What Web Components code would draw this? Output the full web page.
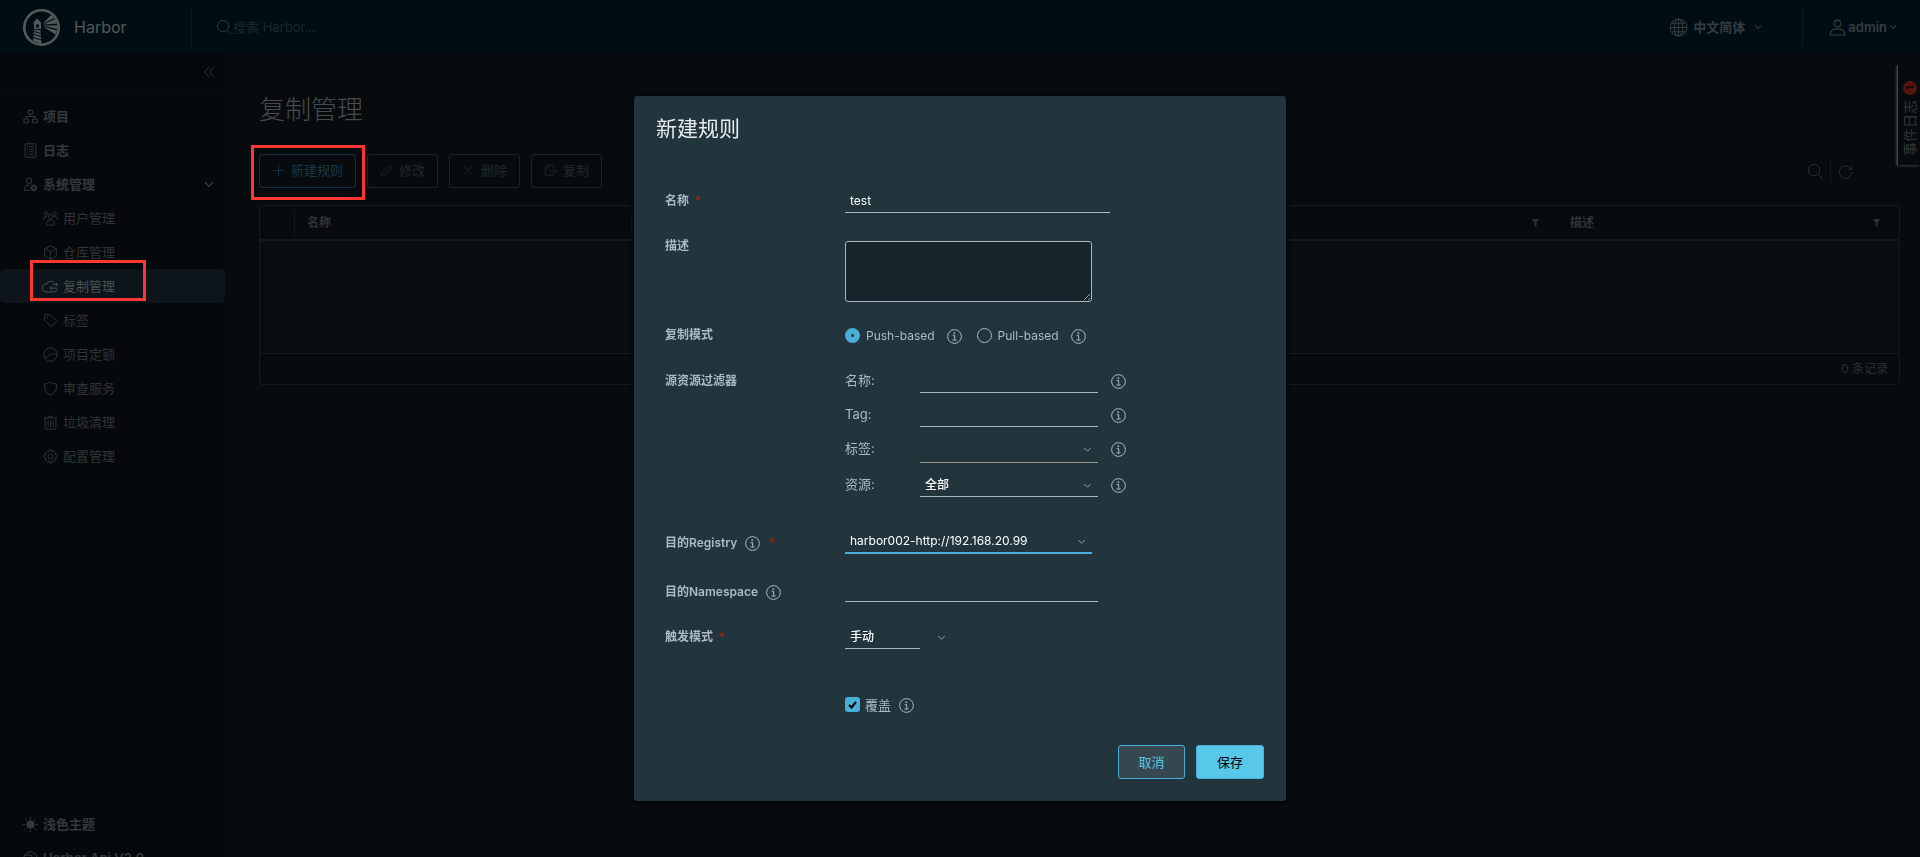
<!DOCTYPE html>
<html lang="zh-CN">
<head>
<meta charset="utf-8">
<title>Harbor</title>
<style>
  html, body { margin: 0; height: 100%; overflow: hidden; background: #070b0e; }
  body { font: 13px/24px Inter, "Noto Sans CJK SC", sans-serif; color: #2f3538; }
</style>
</head>
<body>
<hb-app></hb-app>
<script>
const ICONS = {
  info: '<circle cx="18" cy="18" r="16.500"/><circle cx="17.5" cy="10" r="1.8" fill="currentColor" stroke-width="1"/><path d="M13.500 16h5v10M13 26.500h10"/>',
  chevron: '<path d="M5 12l13 13 13-13"/>',
  collapse: '<path d="M17 5L5 18l12 13M31 5L19 18l12 13"/>',
  search: '<circle cx="15" cy="15" r="12"/><path d="M24 24l9 9"/>',
  globe: '<circle cx="18" cy="18" r="16"/><ellipse cx="18" cy="18" rx="8" ry="16"/><path d="M18 2v32M2 18h32M5 10h26M5 26h26"/>',
  user: '<circle cx="18" cy="9.500" r="7"/><path d="M3 34v-5q3-8 15-8t15 8v5z"/>',
  org: '<path d="M13 3h10v9H13zM2 24h11v9H2zM23 24h11v9H23zM18 12v6M7 24v-6h22v6"/>',
  list: '<rect x="5" y="2" width="26" height="32" rx="2"/><path d="M10 9h2M15 9h11M10 15h2M15 15h11M10 21h2M15 21h11M10 27h2M15 27h11"/>',
  admin: '<circle cx="15" cy="9" r="6.500"/><path d="M16 32H3v-6q3-7 13-7"/><circle cx="26" cy="26" r="5" stroke-width="4"/><path d="M26 17v4M26 31v4M17 26h4M31 26h4M20 20l2 2M30 30l2 2M32 20l-2 2M22 30l-2 2"/>',
  users: '<circle cx="18" cy="13" r="5"/><circle cx="8" cy="6" r="4"/><circle cx="28" cy="6" r="4"/><path d="M9 34v-8q2-5 9-5t9 5v8zM2 22v-6q2-4 8-3M34 22v-6q-2-4-8-3"/>',
  cube: '<path d="M18 2l14 7v18l-14 7-14-7V9zM4 9l14 7 14-7M18 16v18"/>',
  cloud: '<path d="M27 10a10 10 0 0 0-18 2A9 9 0 0 0 7 31h20q6 0 8-6M17 22h18M22 17l-5 5 5 5M24 13h11M31 9l4 4-4 4"/>',
  tag: '<path d="M4 4h13l16 16-13 13L4 17z"/><circle cx="10.500" cy="10.500" r="1.500"/>',
  quota: '<circle cx="18" cy="18" r="16"/><path d="M5 27l13-10h16"/>',
  shield: '<path d="M18 2q7 5 14 5v10q0 11-14 17Q4 28 4 17V7q7 0 14-5z"/>',
  trash: '<path d="M2 7h32M13 7V3h10v4M5 7v24q0 3 3 3h20q3 0 3-3V7M12 13v16M18 13v16M24 13v16"/>',
  gear: '<circle cx="18" cy="18" r="6"/><path d="M15 2h6l1 5 4-3 5 5-3 4 5 1v7l-5 1 3 4-5 5-4-3-1 5h-6l-1-5-4 3-5-5 3-4-5-1v-7l5-1-3-4 5-5 4 3z"/>',
  sun: '<circle cx="18" cy="18" r="9" fill="currentColor"/><path d="M18 0v5M18 31v5M0 18h5M31 18h5M5 5l4 4M27 27l4 4M31 5l-4 4M9 27l-4 4"/>',
  api: '<circle cx="18" cy="18" r="16"/><path d="M5 10h16v6h11M10 32v-8h16v-7"/>',
  plus: '<path d="M18 2v32M2 18h32"/>',
  pencil: '<path d="M3 33l3-10L26 3q3-1 5 2t1 5L12 30zM22 7l7 7"/>',
  cross: '<path d="M6 6l24 24M30 6L6 30"/>',
  copy: '<path d="M26 12V3H11l-7 7v21h22v-5M11 3v8H4M14 19h20M28 13l6 6-6 6"/>',
  refresh: '<path d="M31 12a15 15 0 1 0 2 8M33 3v10H23"/>',
  filter: '<path d="M2 4h32L22 18v16h-8V18z" fill="currentColor"/>'
};

/* Square line icon drawn on a 36-unit grid: <hb-icon name="..."> sized by --size */
customElements.define('hb-icon', class extends HTMLElement {
  connectedCallback() {
    if (this.shadowRoot) return;
    this.attachShadow({ mode: 'open' }).innerHTML = `
      <style>
        :host { display: inline-block; flex: none; width: var(--size, 15px); height: var(--size, 15px); }
        svg { display: block; width: 100%; height: 100%; fill: none; stroke: currentColor; stroke-width: var(--stroke, 2.4); overflow: visible; }
      </style>
      <svg viewBox="0 0 36 36" aria-hidden="true">${ICONS[this.getAttribute('name')]}</svg>`;
  }
});

customElements.define('hb-header', class extends HTMLElement {
  constructor() {
    super();
    this.attachShadow({ mode: 'open' }).innerHTML = `
      <style>
        :host { display: flex; align-items: center; height: 54px; background: #000e14; color: #343c40; box-sizing: border-box; }
        .brand { display: flex; align-items: center; gap: 14px; width: 191px; padding-left: 23px; box-sizing: border-box; color: #54585a; font-size: 16px; text-decoration: none; }
        .brand svg { width: 37px; height: 37px; }
        .rule { width: 1px; height: 38px; background: #0b1a20; }
        .search { display: flex; align-items: center; flex: 1; padding-left: 24px; --size: 17px; --stroke: 2; }
        input { flex: 1; min-width: 0; border: 0; padding: 0; background: none; font: inherit; color: inherit; outline: 0; }
        input::placeholder { color: #1c272c; opacity: 1; }
        button { display: flex; align-items: center; border: 0; background: none; padding: 0; font: inherit; font-weight: 600; color: inherit; }
        .lang { width: 133px; gap: 5px; --size: 19px; --stroke: 2; }
        .user { padding: 0 23px 0 26px; gap: 2px; --size: 17px; --stroke: 2.4; }
        .lang .chev { margin-left: 4px; }
        .chev { --size: 8px; --stroke: 5; }
      </style>
      <a class="brand" href="#">
        <svg viewBox="0 0 37 37" aria-hidden="true">
          <circle cx="18.500" cy="18.500" r="17.200" fill="none" stroke="#54585a" stroke-width="2.600"/>
          <path d="M20 14.500L28 6l3.500 3zM20 15.500L32.500 10l1.500 4.500zM20 16.500L34.500 16.500v3.500zM20 17.500L34 21.500l-1.500 4z" fill="#54585a"/>
          <path d="M10 14l4-4.500 4.500 4.500zM11 14h7v6h-7zM11 21h6.500l1 14-8.500-3z" fill="#54585a"/>
          <path d="M13 15.500h3v3h-3z" fill="#000e14"/>
          <path d="M11 22.500l7 2M10.500 25.500l8 2M10 28.500l9 2.500" fill="none" stroke="#000e14" stroke-width="1"/>
        </svg>
        <span>Harbor</span>
      </a>
      <div class="rule"></div>
      <label class="search"><hb-icon name="search"></hb-icon><input type="search" aria-label="搜索" placeholder="搜索 Harbor..."></label>
      <button class="lang"><hb-icon name="globe"></hb-icon>中文简体<hb-icon class="chev" name="chevron"></hb-icon></button>
      <div class="rule"></div>
      <button class="user"><hb-icon name="user"></hb-icon>admin<hb-icon class="chev" name="chevron"></hb-icon></button>`;
  }
});

/* One navigation link; level="2" indents it, "active" fills its row, "mark" frames it */
customElements.define('hb-nav-item', class extends HTMLElement {
  connectedCallback() {
    if (this.shadowRoot) return;
    this.attachShadow({ mode: 'open' }).innerHTML = `
      <style>
        :host { display: block; position: relative; }
        a { display: flex; align-items: center; gap: 5px; height: 34px; padding: 0 10px 0 23px; color: #34393c; font-weight: 600; text-decoration: none; }
        :host([level="2"]) a { padding-left: 43px; font-weight: 400; color: #2f3437; }
        :host([level="2"][active]) a { background: #0d151b; border-radius: 5px; color: #4a4f52; }
        span { flex: 1; }
        .chev { --size: 12px; --stroke: 4; }
        .mark { position: absolute; left: 30px; top: -9px; width: 116px; height: 41px; border: 3px solid #fb3735; box-sizing: border-box; }
      </style>
      <a href="#"><hb-icon name="${this.getAttribute('icon')}"></hb-icon><span><slot></slot></span>
        ${this.hasAttribute('expanded') ? '<hb-icon class="chev" name="chevron"></hb-icon>' : ''}</a>
      ${this.hasAttribute('mark') ? '<div class="mark"></div>' : ''}`;
  }
});

customElements.define('hb-sidenav', class extends HTMLElement {
  constructor() {
    super();
    this.attachShadow({ mode: 'open' }).innerHTML = `
      <style>
        :host { display: flex; flex-direction: column; width: 225px; flex: none; background: #05090c; }
        .collapse { display: flex; align-items: center; justify-content: flex-end; height: 36px; padding: 0 10px; border: 0; border-bottom: 1px solid #0a0e11; background: none; color: #34393c; box-sizing: border-box; --size: 12px; --stroke: 3; }
        nav { padding-top: 9px; flex: 1; }
        .bottom { flex: none; margin-bottom: -18px; }
      </style>
      <button class="collapse" aria-label="收起"><hb-icon name="collapse"></hb-icon></button>
      <nav>
        <hb-nav-item icon="org">项目</hb-nav-item>
        <hb-nav-item icon="list">日志</hb-nav-item>
        <hb-nav-item icon="admin" expanded>系统管理</hb-nav-item>
        <hb-nav-item level="2" icon="users">用户管理</hb-nav-item>
        <hb-nav-item level="2" icon="cube">仓库管理</hb-nav-item>
        <hb-nav-item level="2" icon="cloud" active mark>复制管理</hb-nav-item>
        <hb-nav-item level="2" icon="tag">标签</hb-nav-item>
        <hb-nav-item level="2" icon="quota">项目定额</hb-nav-item>
        <hb-nav-item level="2" icon="shield">审查服务</hb-nav-item>
        <hb-nav-item level="2" icon="trash">垃圾清理</hb-nav-item>
        <hb-nav-item level="2" icon="gear">配置管理</hb-nav-item>
      </nav>
      <div class="bottom">
        <hb-nav-item icon="sun">浅色主题</hb-nav-item>
        <hb-nav-item icon="api">Harbor Api V2.0</hb-nav-item>
      </div>`;
  }
});

customElements.define('hb-replication', class extends HTMLElement {
  constructor() {
    super();
    this.attachShadow({ mode: 'open' }).innerHTML = `
      <style>
        :host { display: block; flex: 1; min-width: 0; padding: 40px 20px 0 34px; }
        h1 { margin: 0 0 28px; font-size: 26px; line-height: 32px; font-weight: 300; color: #484c4e; }
        .bar { display: flex; align-items: center; gap: 11px; margin-bottom: 17px; }
        .act { position: relative; }
        .act button { display: flex; align-items: center; gap: 6px; height: 34px; padding: 0 12px 2px; border: 1px solid #1d2224; border-radius: 3px; background: none; color: #23282a; font: inherit; --size: 13px; --stroke: 2; }
        .act.new button { border-color: #123040; color: #163a4b; }
        .mark { position: absolute; left: -8px; top: -9px; right: -9px; bottom: -12px; border: 3px solid #fb3735; }
        .tools { display: flex; align-items: center; margin-left: auto; padding-right: 47px; color: #2c3134; }
        .tools button { display: flex; padding: 0; border: 0; background: none; color: inherit; --size: 17px; --stroke: 2; }
        .tools i { width: 1px; height: 24px; margin: 0 7px 0 6px; background: #14191c; }
        .tools .r { --size: 15px; }
        table { width: 100%; border: 1px solid #14191b; border-radius: 3px; border-spacing: 0; table-layout: fixed; }
        th { height: 33px; padding: 0; border-bottom: 2px solid #14191b; text-align: left; font-size: 12px; font-weight: 600; color: #2f3437; }
        th div { display: flex; align-items: center; height: 24px; padding: 0 18px 0 12px; }
        th.sep div { border-right: 1px solid #14191b; }
        th hb-icon { --size: 9px; --stroke: 0; margin-left: auto; color: #2c3032; }
        .c1 { width: 35px; } .c2 { width: 337px; } .c4 { width: 341px; }
        tbody td { height: 112px; padding: 0; background: #080e10; border-bottom: 1px solid #14191b; }
        tfoot td { height: 30px; padding: 0 11px; text-align: right; font-size: 12px; color: #2c3134; }
      </style>
      <h1>复制管理</h1>
      <div class="bar">
        <div class="act new"><button><hb-icon name="plus"></hb-icon>新建规则</button><div class="mark"></div></div>
        <div class="act"><button disabled><hb-icon name="pencil"></hb-icon>修改</button></div>
        <div class="act"><button disabled><hb-icon name="cross"></hb-icon>删除</button></div>
        <div class="act"><button disabled><hb-icon name="copy"></hb-icon>复制</button></div>
        <div class="tools"><button aria-label="搜索"><hb-icon name="search"></hb-icon></button><i></i><button class="r" aria-label="刷新"><hb-icon name="refresh"></hb-icon></button></div>
      </div>
      <table>
        <thead><tr>
          <th class="c1 sep"><div></div></th>
          <th class="c2 sep"><div>名称</div></th>
          <th><div><hb-icon name="filter"></hb-icon></div></th>
          <th class="c4"><div>描述<hb-icon name="filter"></hb-icon></div></th>
        </tr></thead>
        <tbody><tr><td colspan="4"></td></tr></tbody>
        <tfoot><tr><td colspan="4">0 条记录</td></tr></tfoot>
      </table>`;
  }
});

customElements.define('hb-event-tab', class extends HTMLElement {
  constructor() {
    super();
    this.attachShadow({ mode: 'open' }).innerHTML = `
      <style>
        :host { position: absolute; right: 0; top: 65px; }
        button { display: flex; align-items: center; gap: 5px; width: 23px; height: 100px; padding: 9px 2px 15px 0; box-sizing: border-box; border: 0; border-right: 1px solid #454749; background: #070b0e; color: #30363a; font: inherit; font-size: 14px; line-height: 20px; writing-mode: vertical-rl; text-orientation: sideways; transform: rotate(180deg); box-shadow: 1px -1px 2px #3a3c3e; }
        b { display: block; width: 14px; height: 14px; border-radius: 50%; background: #561310; color: #0a0505; font-size: 10px; line-height: 14px; text-align: center; }
      </style>
      <button><span>事件日志</span><b>1</b></button>`;
  }
});

customElements.define('hb-rule-dialog', class extends HTMLElement {
  constructor() {
    super();
    const info = '<hb-icon class="info" name="info"></hb-icon>';
    const chev = '<hb-icon class="chev" name="chevron"></hb-icon>';
    this.attachShadow({ mode: 'open' }).innerHTML = `
      <style>
        :host { position: fixed; inset: 0; display: flex; align-items: flex-start; justify-content: center; padding-top: 96px; }
        form { width: 652px; box-sizing: border-box; padding: 21px 22px 22px; border-radius: 3px; background: #22343c; color: #acbac3; box-shadow: 0 1px 3px 2px #04070a; }
        h2 { margin: 0 0 48px; font-size: 21px; line-height: 24px; font-weight: 400; color: #e9ecef; }
        .row { display: grid; grid-template-columns: 180px 1fr; align-items: start; margin: 0 9px 21px; }
        .title { display: flex; align-items: center; font-size: 12px; font-weight: 600; }
        .title .info { margin-left: 8px; }
        .title em { margin-left: 6px; color: #c92100; font-style: normal; font-weight: 400; opacity: .8; }
        .title .info + em { margin-left: 9px; }
        .opts { display: flex; align-items: center; height: 25px; }
        .opts label { margin-left: 6px; font-size: 12px; }
        .opts .big { margin-left: 5px; font-size: 13px; line-height: 22px; }
        .opts .info { margin: 2px 15px 0 12px; }
        .opts .info.near { margin-left: 8px; }
        input, select, textarea { display: block; box-sizing: border-box; margin: 0; font: inherit; font-size: 12px; color: #fff; outline: 0; }
        input[type=text], select { width: 100%; height: 24px; padding: 0 5px; border: 0; border-bottom: 1px solid #acbac3; border-radius: 0; background: none; appearance: none; line-height: 20px; }
        textarea { width: 247px; height: 61px; margin-top: 7px; border: 1px solid #acbac3; border-radius: 3px; background: #17242b; }
        .pick { position: relative; display: block; }
        .chev { position: absolute; right: 6px; top: 8px; color: #95a0a5; pointer-events: none; --size: 9px; --stroke: 4; }
        .w265 { width: 265px; } .w247 { width: 247px; } .w253 { width: 253px; } .w107 { width: 107px; }
        .w107 select { width: 75px; }
        select option { color: #000; }
        .zh { font-weight: 500; }
        .focus select { height: 25px; border-bottom: 2px solid #49afd9; }
        .pale select { height: 26px; border-color: #9b948f; }
        .filters { display: grid; gap: 10px; margin-bottom: 11px; }
        .filter { display: grid; grid-template-columns: 75px 178px 28px; align-items: start; }
        .filter label { line-height: 22px; }
        .filter .info { margin: 5px 0 0 13px; }
        input[type=radio], input[type=checkbox] { appearance: none; width: 15px; height: 15px; flex: none; border: 1px solid #acbac3; border-radius: 50%; }
        input[type=radio]:checked { border: 6px solid #49afd9; background: #22343c; }
        .check { position: relative; display: flex; }
        input[type=checkbox] { border: 0; border-radius: 3px; background: #49afd9; }
        .check svg { position: absolute; left: 3px; top: 4px; width: 9px; height: 8px; fill: none; stroke: #000; stroke-width: 2; pointer-events: none; }
        .reg { margin-bottom: 23px; }
        .reg .title, .ns .title { padding-top: 2px; }
        .ns { margin-bottom: 21px; }
        .trigger { margin-bottom: 43px; }
        .over { margin-bottom: 28px; }
        footer { display: flex; justify-content: flex-end; gap: 11px; }
        button { height: 34px; width: 67px; padding: 0 0 1px; border: 1px solid #49afd9; border-radius: 3px; background: #37474f; color: #57c8ea; font: inherit; }
        button.primary { width: 68px; background: #57c8ea; color: #000; }
      </style>
      <form role="dialog" aria-labelledby="t" onsubmit="return false">
        <h2 id="t">新建规则</h2>
        <div class="row"><label class="title" for="name">名称<em>*</em></label><div class="w265"><input type="text" id="name" value="test"></div></div>
        <div class="row"><label class="title" for="desc">描述</label><textarea id="desc"></textarea></div>
        <div class="row"><span class="title">复制模式</span><div class="opts">
          <input type="radio" name="mode" id="push" checked><label for="push">Push-based</label>${info}
          <input type="radio" name="mode" id="pull"><label for="pull">Pull-based</label>${info}</div></div>
        <div class="row"><span class="title">源资源过滤器</span><div class="filters">
          <div class="filter"><label for="f1">名称:</label><input type="text" id="f1">${info}</div>
          <div class="filter"><label for="f2">Tag:</label><input type="text" id="f2">${info}</div>
          <div class="filter"><label for="f3">标签:</label><span class="pick pale"><select id="f3"></select>${chev}</span>${info}</div>
          <div class="filter"><label for="f4">资源:</label><span class="pick"><select id="f4" class="zh"><option>全部</option></select>${chev}</span>${info}</div>
        </div></div>
        <div class="row reg"><label class="title" for="reg">目的Registry${info}<em>*</em></label><span class="pick focus w247"><select id="reg"><option>harbor002-http://192.168.20.99</option></select>${chev}</span></div>
        <div class="row ns"><label class="title" for="ns">目的Namespace${info}</label><div class="w253"><input type="text" id="ns"></div></div>
        <div class="row trigger"><label class="title" for="trg">触发模式<em>*</em></label><span class="pick w107"><select id="trg" class="zh"><option>手动</option></select>${chev}</span></div>
        <div class="row over"><span></span><div class="opts"><span class="check"><input type="checkbox" id="ov" checked><svg viewBox="0 0 9 8" aria-hidden="true"><path d="M1 4l2.500 2.500L8 1"/></svg></span><label class="big" for="ov">覆盖</label><hb-icon class="info near" name="info"></hb-icon></div></div>
        <footer><button type="button">取消</button><button class="primary">保存</button></footer>
      </form>`;
  }
});

customElements.define('hb-app', class extends HTMLElement {
  constructor() {
    super();
    this.attachShadow({ mode: 'open' }).innerHTML = `
      <style>
        :host { display: flex; flex-direction: column; height: 100vh; overflow: hidden; position: relative; }
        main { display: flex; flex: 1; min-height: 0; }
      </style>
      <hb-header></hb-header>
      <main><hb-sidenav></hb-sidenav><hb-replication></hb-replication></main>
      <hb-event-tab></hb-event-tab>
      <hb-rule-dialog></hb-rule-dialog>`;
  }
});
</script>
</body>
</html>
